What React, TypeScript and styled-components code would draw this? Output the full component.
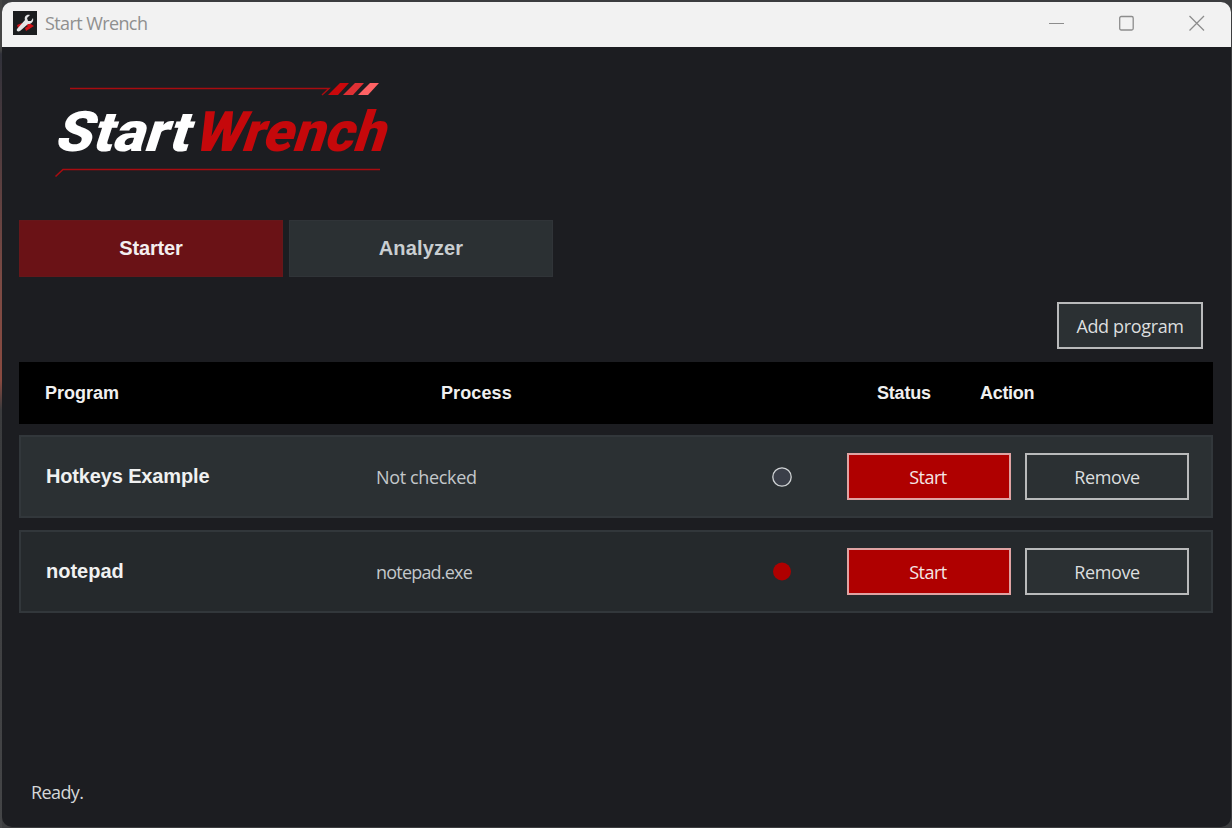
import React from "react";
import styled, { createGlobalStyle } from "styled-components";

const UI_FONT = `"Open Sans", "Noto Sans", sans-serif`;
const BOLD_FONT = `"Liberation Sans", Arial, sans-serif`;

const GlobalStyle = createGlobalStyle`
  * { box-sizing: border-box; }
  body { margin: 0; background: #000; overflow: hidden; }
  button { font: inherit; margin: 0; padding: 0; }
`;

const Desktop = styled.div`
  width: 1232px;
  height: 828px;
  padding: 2px 1px 1px 2px;
  background: linear-gradient(#444 0, #444 50px, #30313a 54px, #7b4a44 280px, #8a4a40 380px, #3a3b3d 410px, #444547 828px) left / 2px 100% no-repeat, #3c3d3f;
`;

const Window = styled.div`
  display: flex;
  flex-direction: column;
  height: 825px;
  border-radius: 10px;
  overflow: hidden;
  background: #1c1d21;
  font-family: ${UI_FONT};
  color: #d5d7d8;
`;

const TitleBar = styled.header`
  display: flex;
  align-items: center;
  height: 45px;
  flex: none;
  padding: 0 0 3px 11px;
  background: #f2f2f2;
  color: #8f8f8f;
`;

const Title = styled.span`
  flex: 1;
  margin-left: 8px;
  font-size: 18px;
  line-height: 24px;
  letter-spacing: -0.6px;
`;

const WindowButton = styled.span`
  display: flex;
  justify-content: center;
  width: 70px;
  height: 18px;
  &:last-child { width: 69px; }
`;

const Content = styled.main`
  display: flex;
  flex-direction: column;
  flex: 1;
  padding: 23px 18px 0 17px;
`;

const Logo = styled.svg`
  display: block;
  flex: none;
  margin-left: 21px;
  overflow: visible;
`;

const Tabs = styled.nav`
  display: flex;
  gap: 6px;
  margin-top: 30px;
`;

const Tab = styled.button<{ $active?: boolean }>`
  width: 264px;
  height: 57px;
  border: 1px solid ${(p) => (p.$active ? "#66171a" : "#303438")};
  background: ${(p) => (p.$active ? "#6a1216" : "#2b3033")};
  color: ${(p) => (p.$active ? "#f3efef" : "#c9ced1")};
  font-family: ${BOLD_FONT};
  font-weight: bold;
  font-size: 20px;
`;

const Toolbar = styled.div`
  display: flex;
  justify-content: flex-end;
  padding: 25px 10px 13px 0;
`;

const Button = styled.button<{ $primary?: boolean; $width: number }>`
  width: ${(p) => p.$width}px;
  height: 47px;
  padding-right: ${(p) => (p.$primary ? 2 : 0)}px;
  border: 2px solid ${(p) => (p.$primary ? "#dfa3a3" : "#b9babb")};
  background: ${(p) => (p.$primary ? "#af0000" : "#2b3033")};
  color: ${(p) => (p.$primary ? "#f5e6e6" : "#dcdedf")};
  font-size: 18px;
`;

const TableHead = styled.div`
  display: grid;
  grid-template-columns: 396px 436px 103px 1fr;
  align-items: center;
  height: 62px;
  margin-bottom: -1px;
  padding-left: 26px;
  background: #000;
  color: #f0f0f0;
  font: bold 18px ${BOLD_FONT};
`;

const Row = styled.div<{ $alt?: boolean }>`
  display: grid;
  grid-template-columns: 330px 396px 75px 178px 1fr;
  align-items: center;
  height: 83px;
  margin-top: 12px;
  padding-left: 25px;
  border: 2px solid #32373b;
  background: ${(p) => (p.$alt ? "#25292c" : "#2b3033")};
`;

const Name = styled.span`
  font: bold 20px ${BOLD_FONT};
  color: #f0f1f1;
`;

const Process = styled.span`
  font-size: 18px;
  color: #c3c7ca;
`;

const Spaced = styled.span<{ $spacing: number }>`
  letter-spacing: ${(p) => p.$spacing}px;
  white-space: nowrap;
`;

const Footer = styled.footer`
  margin: auto 0 21px 12px;
  font-size: 18px;
  line-height: 28px;
`;

function AppIcon() {
  return (
    <svg width="24" height="24" viewBox="0 0 24 24">
      <rect width="24" height="24" fill="#1b1d1f" />
      <path d="M13 10l8 5-8 5-1-3 3-2-4-2zM4 14l5-2 1 2-5 3z" fill="#d01318" />
      <path d="M4 18l8-9c-1-3 1-6 5-5l-3 3 1 3 3 0 2-3c1 4-2 6-5 6l-8 7c-2 1-4 0-3-2z" fill="#e3e4e5" />
    </svg>
  );
}

function Brand() {
  return (
    <Logo width="350" height="120" viewBox="40 70 350 120">
      <path d="M70 88.500H329L322 95" fill="none" stroke="#a80c10" strokeWidth="1.500" />
      <path d="M340 83h9l-11 12h-10z" fill="#c9080b" />
      <path d="M355 83h9l-11 12h-10z" fill="#df3034" />
      <path d="M370 83h9l-11 12h-10z" fill="#ff6264" />
      <path d="M55.500 176.500L63 169.500H380" fill="none" stroke="#a80c10" strokeWidth="1.600" />
      <g fontFamily="Roboto, sans-serif" fontWeight="900" fontSize="56" transform="translate(0 151) skewX(-18)">
        <text x="53" y="0" fill="#fff" textLength="134" lengthAdjust="spacingAndGlyphs">Start</text>
        <text x="192" y="0" fill="#c5080b" textLength="191" lengthAdjust="spacingAndGlyphs">Wrench</text>
      </g>
    </Logo>
  );
}

function StatusDot({ stopped }: { stopped?: boolean }) {
  return (
    <svg width="20" height="20" viewBox="0 0 20 20">
      {stopped ? (
        <circle cx="10" cy="9.500" r="9" fill="#af0000" />
      ) : (
        <circle cx="10" cy="10" r="9.200" fill="#3b3f49" stroke="#cfd2d4" strokeWidth="1.300" />
      )}
    </svg>
  );
}

function ProgramRow({ name, process, stopped, nameSpacing, processSpacing }: {
  name: string; process: string; stopped?: boolean; nameSpacing: number; processSpacing: number;
}) {
  return (
    <Row $alt={stopped}>
      <Name><Spaced $spacing={nameSpacing}>{name}</Spaced></Name>
      <Process><Spaced $spacing={processSpacing}>{process}</Spaced></Process>
      <StatusDot stopped={stopped} />
      <Button $primary $width={164}><Spaced $spacing={-0.5}>Start</Spaced></Button>
      <Button $width={164}><Spaced $spacing={-0.4}>Remove</Spaced></Button>
    </Row>
  );
}

export default function App() {
  return (
    <Desktop>
      <GlobalStyle />
      <Window>
        <TitleBar>
          <AppIcon />
          <Title>Start Wrench</Title>
          <WindowButton>
            <svg width="16" height="18"><path d="M0 9.500h15" stroke="#8d8d8d" /></svg>
          </WindowButton>
          <WindowButton>
            <svg width="16" height="18"><rect x="0" y="2.500" width="13.500" height="13.500" rx="1.500" fill="none" stroke="#8d8d8d" strokeWidth="1.300" overflow="visible" transform="translate(0.7 0)" /></svg>
          </WindowButton>
          <WindowButton>
            <svg width="16" height="18"><path d="M.5 2l14.500 14.500M15 2L.5 16.500" stroke="#8d8d8d" strokeWidth="1.300" /></svg>
          </WindowButton>
        </TitleBar>
        <Content>
          <Brand />
          <Tabs>
            <Tab $active><Spaced $spacing={-0.15}>Starter</Spaced></Tab>
            <Tab><Spaced $spacing={0.15}>Analyzer</Spaced></Tab>
          </Tabs>
          <Toolbar>
            <Button $width={146}><Spaced $spacing={-0.35}>Add program</Spaced></Button>
          </Toolbar>
          <TableHead>
            <span>Program</span>
            <Spaced $spacing={0.1}>Process</Spaced>
            <Spaced $spacing={-0.2}>Status</Spaced>
            <Spaced $spacing={-0.3}>Action</Spaced>
          </TableHead>
          <ProgramRow name="Hotkeys Example" process="Not checked" nameSpacing={-0.15} processSpacing={-0.35} />
          <ProgramRow name="notepad" process="notepad.exe" stopped nameSpacing={0} processSpacing={-0.8} />
          <Footer><Spaced $spacing={-0.6}>Ready.</Spaced></Footer>
        </Content>
      </Window>
    </Desktop>
  );
}
